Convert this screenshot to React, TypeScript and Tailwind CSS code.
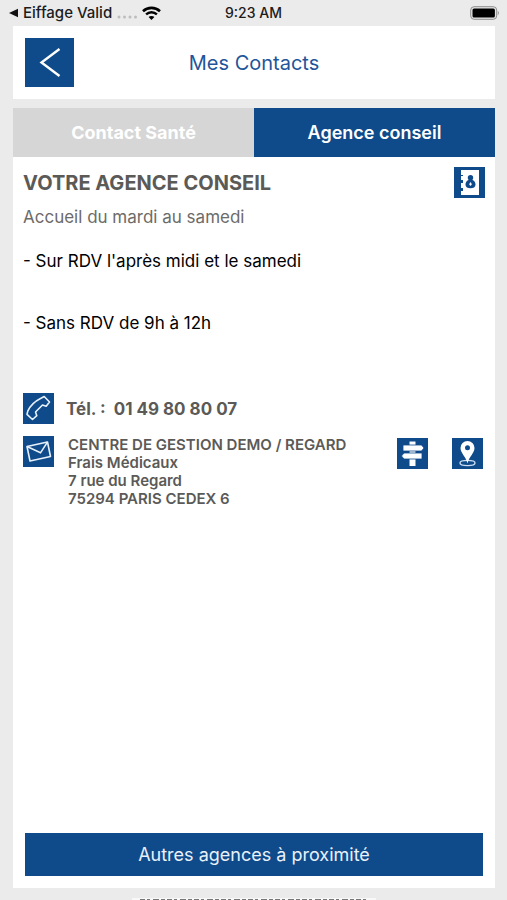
import type { ReactNode } from "react";

function IconButton({ label, children }: { label: string; children: ReactNode }) {
  return (
    <button type="button" aria-label={label} className="block size-[31px] shrink-0 bg-[#0f4a8a]">
      <svg viewBox="0 0 31 31" className="size-full" fill="none" aria-hidden="true">
        {children}
      </svg>
    </button>
  );
}

function StatusBar() {
  return (
    <div className="grid h-[26px] shrink-0 grid-cols-[1fr_auto_1fr] items-center px-2 text-[15px] leading-4 font-medium text-[#1c1c1c]">
      <div className="flex items-center">
        <svg viewBox="0 0 11 10" className="mr-1 h-[10px] w-[11px]" aria-hidden="true">
          <path d="M1 5 10 0.7v8.6z" fill="#111" />
        </svg>
        <span className="whitespace-nowrap">Eiffage Valid</span>
        <svg viewBox="0 0 22 4" className="mt-2 ml-1 h-1 w-[22px]" fill="#bdbdbd" aria-hidden="true">
          <circle cx="3" cy="2" r="1.5" />
          <circle cx="8.5" cy="2" r="1.5" />
          <circle cx="14" cy="2" r="1.5" />
          <circle cx="19.5" cy="2" r="1.5" />
        </svg>
        <svg viewBox="0 0 19 14" className="ml-1 h-[14px] w-[19px]" fill="none" stroke="#000" aria-hidden="true">
          <path d="M1 5.2C5.8.7 13.2.7 18 5.2" strokeWidth="2.6" />
          <path d="M4.1 8.4c3.1-2.9 7.7-2.9 10.8 0" strokeWidth="2.4" />
          <path d="M9.5 14 6.6 11c1.6-1.5 4.2-1.5 5.8 0z" fill="#000" stroke="none" />
        </svg>
      </div>
      <span className="text-[14px]">9:23 AM</span>
      <svg viewBox="0 0 30 14" className="h-[14px] w-[30px] justify-self-end" aria-hidden="true">
        <rect x="1.7" y="0.7" width="26" height="12.6" rx="3.4" fill="#e4e4e4" stroke="#8e8e8e" />
        <rect x="3.5" y="2.5" width="22.4" height="9" rx="1.6" fill="#000" />
        <path d="M28.8 5v4c1.3-.6 1.3-3.4 0-4z" fill="#8e8e8e" />
      </svg>
    </div>
  );
}

export default function App() {
  return (
    <div className="flex h-screen flex-col overflow-hidden bg-[#ebebeb] font-['Inter',sans-serif]">
      <StatusBar />
      <header className="mr-3 ml-[13px] grid h-[73px] shrink-0 grid-cols-[49px_1fr_49px] items-center bg-white px-3">
        <button type="button" aria-label="Retour" className="size-[49px] bg-[#0f4a8a]">
          <svg viewBox="0 0 49 49" className="size-full" fill="none" aria-hidden="true">
            <path d="M34.500 11 16.500 24.500 34.500 38" stroke="#fff" strokeWidth="2.4" />
          </svg>
        </button>
        <h1 className="text-center text-[20px] leading-6 text-[#1f559a]">Mes Contacts</h1>
      </header>

      <nav className="mr-3 ml-[13px] mt-[9px] grid h-[49px] shrink-0 grid-cols-2 text-[18px] font-bold text-white">
        <button type="button" className="bg-[#d6d6d6]">Contact Santé</button>
        <button type="button" className="bg-[#0f4a8a] font-semibold">Agence conseil</button>
      </nav>

      <main className="mr-3 ml-[13px] flex min-h-0 flex-1 flex-col bg-white px-[10px] pt-[10px] pb-3 text-[#5b5a57]">
        <div className="flex items-start justify-between">
          <div>
            <h2 className="text-[20px] leading-8 font-bold">VOTRE AGENCE CONSEIL</h2>
            <p className="mt-1 text-[17px] leading-7 text-[#6c6b69]">Accueil du mardi au samedi</p>
          </div>
          <IconButton label="Carnet de contacts">
            <path d="M7 3h18v25H7v-4h2v-3H7v-5h2v-3H7v-4h2V8H7z" fill="#fff" />
            <circle cx="16.500" cy="10.700" r="2.700" fill="#0f4a8a" />
            <path d="M14.500 13h4c2.200 1 3 2.600 3 4.700 0 2.400-2.200 3.500-5 3.500s-5-1.100-5-3.500c0-2.100.8-3.700 3-4.700z" fill="#0f4a8a" />
            <path d="m16.500 15 1.400 2.200-1.400 1.700-1.400-1.700z" fill="#fff" />
          </IconButton>
        </div>

        <div className="mt-5 text-[17px] leading-[21px] text-black">
          <p>- Sur RDV l'après midi et le samedi</p>
          <p className="mt-[41px]">- Sans RDV de 9h à 12h</p>
        </div>

        <div className="mt-[59px] flex items-center gap-3">
          <IconButton label="Appeler">
            <path d="m17.500 5.500 3.700-2 5.300 5.500-3.300 4.300-3.700-1.300-7 7 1.300 3.700-4.300 3.800-5.500-5.200.9-3.500C7 13.500 12.500 8 17.500 5.500z" stroke="#e7f1fb" strokeWidth="1.600" strokeLinejoin="round" />
          </IconButton>
          <p className="text-[17px] leading-5 font-bold whitespace-pre">Tél. :  01 49 80 80 07</p>
        </div>

        <div className="mt-3 flex items-start">
          <IconButton label="Envoyer un courrier">
            <path d="M4 10.500 24.500 6l3 14.500L7 25z" stroke="#e7f1fb" strokeWidth="1.600" strokeLinejoin="round" />
            <path d="m4 10.500 13.500 6.300 7-10.800" stroke="#e7f1fb" strokeWidth="1.500" />
          </IconButton>
          <address className="ml-[14px] text-[15px] leading-[18px] font-semibold not-italic">
            <p>CENTRE DE GESTION DEMO / REGARD</p>
            <p>Frais Médicaux</p>
            <p>7 rue du Regard</p>
            <p>75294 PARIS CEDEX 6</p>
          </address>
          <div className="mt-0.5 mr-0.5 ml-auto flex gap-6">
            <IconButton label="Itinéraire">
              <path d="M12.500 3.500h6v24.500h-6z" fill="#fff" />
              <path d="M6 7h18.500l2.500 3-2.500 3H6z" fill="#fff" stroke="#0f4a8a" strokeWidth="0.800" />
              <path d="M25 15H7l-2.500 3L7 21h18z" fill="#fff" stroke="#0f4a8a" strokeWidth="0.800" />
            </IconButton>
            <IconButton label="Localiser">
              <ellipse cx="15.500" cy="25" rx="7.500" ry="2.600" stroke="#c9dcf0" strokeWidth="1.400" />
              <path d="M15.500 25.500C14.500 19.500 8.500 15 8.500 9.900a7 7 0 0 1 14 0c0 5.100-6 9.600-7 15.600z" fill="#fff" />
              <circle cx="15.500" cy="9.700" r="2.500" fill="#0f4a8a" />
            </IconButton>
          </div>
        </div>

        <button type="button" className="mx-0.5 mt-auto h-[43px] bg-[#0f4a8a] text-[18px] text-[#e9f1fa]">
          Autres agences à proximité
        </button>
      </main>
      <footer className="flex h-3 shrink-0 items-end justify-center">
        <svg viewBox="0 0 244 2" className="h-0.5 w-[244px] bg-[#f8f8f8]" aria-hidden="true">
          <path d="M8 1.500h228" stroke="#777" strokeDasharray="5 2 3 3 6 2 4 2" />
        </svg>
      </footer>
    </div>
  );
}
